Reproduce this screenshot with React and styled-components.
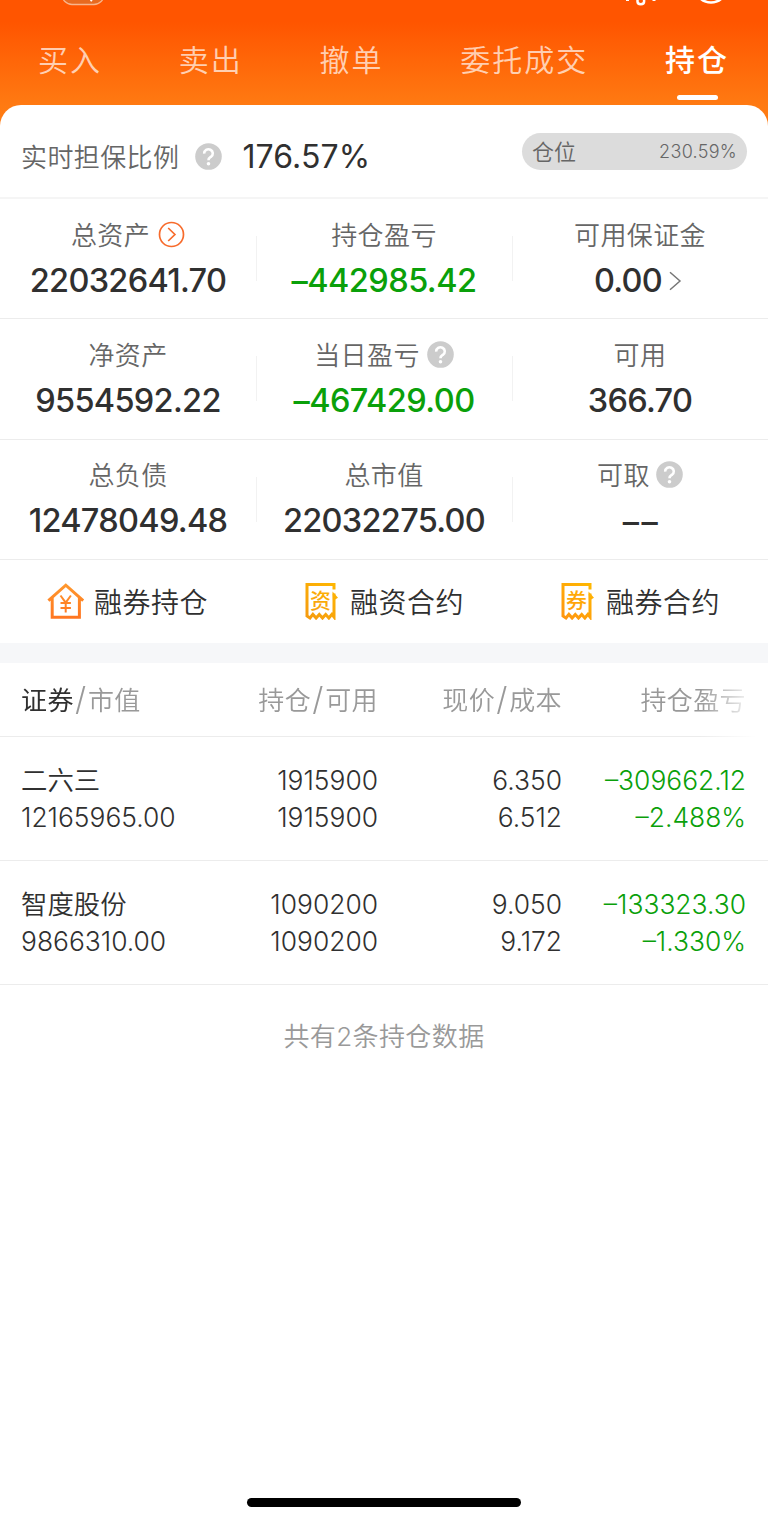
import React from "react"
import styled, { createGlobalStyle } from "styled-components"

const colors = {
  text: "#303030",
  label: "#666",
  muted: "#999",
  line: "#f2f2f2",
  green: "#0aa00a",
  orange: "#f76b2c",
}

const GlobalStyle = createGlobalStyle`
  * {
    box-sizing: border-box;
  }

  body {
    background: #fff;
    color: ${colors.text};
    font-family: Inter, "Noto Sans CJK SC", sans-serif;
    margin: 0;
  }
`

const Page = styled.div`
  display: flex;
  flex-direction: column;
  height: 1522px;
  overflow: hidden;
  width: 768px;
`

const Header = styled.header`
  background: linear-gradient(#ff5500 0, #ff5500 22px, #ff7a12 105px, #ff7d14 126px);
  height: 126px;
`

const StatusBar = styled.div`
  height: 20px;

  svg {
    display: block;
  }
`

const Tabs = styled.nav`
  display: flex;
  justify-content: space-between;
  padding: 18px 41px 0 38px;
`

const Tab = styled.div`
  align-items: center;
  color: ${props => (props.$active ? "#fff" : "rgba(255, 255, 255, 0.7)")};
  display: flex;
  flex-direction: column;
  font-size: 30px;
  font-weight: ${props => (props.$active ? 500 : 350)};
  gap: 12.5px;
  letter-spacing: 2px;
  line-height: 44px;
  margin-right: -2px;

  &::after {
    background: ${props => (props.$active ? "#fff" : "transparent")};
    border-radius: 3px;
    content: "";
    height: 5px;
    width: 41px;
  }
`

const Sheet = styled.main`
  background: #fff;
  border-radius: 21px 21px 0 0;
  flex: 1;
  margin-top: -21px;
`

const RatioRow = styled.div`
  align-items: center;
  border-bottom: 2px solid #f5f5f5;
  display: flex;
  height: 94px;
  padding: 13px 21px 0;
`

const Label = styled.div`
  align-items: center;
  color: ${colors.label};
  display: flex;
  font-size: 26px;
  font-weight: 350;
  height: 36px;
  letter-spacing: 0.4px;
  line-height: 36px;

  svg {
    margin-bottom: 3px;
  }
`

const Ratio = styled.div`
  font-size: 32px;
  letter-spacing: 0.1px;
  margin: -3px 0 0 20px;
`

const Pill = styled.div`
  align-items: center;
  background: #dcdcdc;
  border-radius: 19px;
  color: ${colors.label};
  display: flex;
  font-size: 22px;
  font-weight: 350;
  height: 37px;
  justify-content: space-between;
  margin: -12px 0 0 auto;
  padding: 0 10px 3px;
  width: 225px;
`

const PillValue = styled.span`
  font-size: 18px;
  letter-spacing: 0.3px;
  padding-top: 2px;
`

const Stats = styled.div`
  display: grid;
  grid-template-columns: repeat(3, 256px);
`

const Stat = styled.div`
  align-items: center;
  border-bottom: 1px solid #ececec;
  display: flex;
  flex-direction: column;
  height: 120.3px;
  padding-top: 18.7px;

  &:not(:nth-child(3n + 1)) {
    background: linear-gradient(#f2f2f2, #f2f2f2) left 37px / 1px 45px no-repeat;
  }
`

const StatValue = styled.div`
  align-items: center;
  color: ${props => (props.$down ? colors.green : colors.text)};
  display: flex;
  font-size: 32.5px;
  font-weight: 500;
  height: 44px;
  letter-spacing: ${props => (props.$down ? "-0.55px" : "-0.7px")};
  line-height: 44px;
  margin-top: 5px;
`

const EmptyValue = styled(StatValue)`
  letter-spacing: 2.5px;
  margin-top: 6px;
  padding-left: 3px;
`

const Shortcuts = styled.div`
  display: grid;
  grid-template-columns: repeat(3, 256px);
  height: 83px;
`

const Shortcut = styled.div`
  align-items: center;
  display: flex;
  font-size: 28px;
  font-weight: 350;
  gap: 9px;
  letter-spacing: 0.5px;
  padding-left: 47px;
`

const Divider = styled.div`
  background: #f6f7f9;
  height: 20px;
`

const Row = styled.div`
  border-bottom: 1px solid #ececec;
  display: grid;
  grid-template-columns: 179px 178px 184px 184px;
  padding: 0 21px;
  width: 768px;
`

const HeadRow = styled(Row)`
  color: ${colors.muted};
  font-size: 26px;
  font-weight: 350;
  height: 74.5px;
  letter-spacing: 0.4px;
  line-height: 75px;
  mask-image: linear-gradient(90deg, #000 700px, transparent 756px);

  b {
    color: ${colors.text};
    font-weight: 400;
  }
`

const HeadCell = styled.div`
  text-align: ${props => (props.$left ? "left" : "right")};
  white-space: nowrap;
`

const Slash = styled.span`
  font-size: 32px;
  font-weight: 300;
  line-height: 1;
  margin: 0 1.3px;
`

const PositionRow = styled(Row)`
  height: 124px;
  padding-top: 24.6px;
`

const Cell = styled.div`
  color: ${props => (props.$down ? colors.green : colors.text)};
  font-size: 26.4px;
  font-weight: 350;
  line-height: 37px;
  text-align: ${props => (props.$left ? "left" : "right")};
  white-space: nowrap;
`

const Footer = styled.div`
  color: ${colors.muted};
  font-size: 26px;
  font-weight: 350;
  letter-spacing: 0.4px;
  line-height: 36px;
  padding-top: 33.5px;
  text-align: center;
`

const HomeIndicator = styled.div`
  background: #000;
  border-radius: 5px;
  height: 9px;
  margin: 0 auto 15.5px;
  width: 274px;
`

const HelpIcon = ({ gap }) => (
  <svg width="27" height="27" viewBox="0 0 27 27" style={{ marginLeft: gap }}>
    <circle cx="13.5" cy="13.5" r="13.3" fill="#ccc" />
    <path d="M9.2 10.6a4.3 4.1 0 1 1 6.7 3.2c-1.5 1-2.4 1.5-2.4 3.4" fill="none" stroke="#fff" strokeWidth="2.6" />
    <circle cx="13.5" cy="20.7" r="1.8" fill="#fff" />
  </svg>
)

const CircleArrow = () => (
  <svg width="27" height="27" viewBox="0 0 27 27" fill="none" stroke={colors.orange} strokeWidth="1.7" style={{ marginLeft: 8 }}>
    <circle cx="13.5" cy="13.5" r="12" />
    <path d="M10.2 7l6.7 6.5-6.7 6.5" />
  </svg>
)

const Chevron = () => (
  <svg width="17" height="20" viewBox="0 0 17 20" fill="none" stroke="#777" strokeWidth="1.5" style={{ marginLeft: 7 }}>
    <path d="M1 1.2l10 8.8-10 8.8" />
  </svg>
)

const HouseIcon = () => (
  <svg width="38" height="38" viewBox="0 0 38 38" fill="none" stroke="url(#house)" strokeWidth="3">
    <defs>
      <linearGradient id="house" gradientUnits="userSpaceOnUse" x1="0" y1="0" x2="0" y2="38">
        <stop offset="0" stopColor="#ff9a2e" />
        <stop offset="1" stopColor="#ff7420" />
      </linearGradient>
    </defs>
    <path d="M1.4 18.6L18.8 3.2l17.4 15.4M5.2 16v19.3h27.2V16" />
    <path d="M13.5 13.5l5.2 7.2 5.2-7.2M18.7 20.5v10M13.5 21h10.4M13.5 26h10.4" strokeWidth="2" />
  </svg>
)

const ReceiptIcon = ({ children, from, to }) => (
  <svg width="38" height="38" viewBox="0 0 38 38" fill="none" strokeWidth="3">
    <defs>
      <linearGradient id={`receipt-${children}`} gradientUnits="userSpaceOnUse" x1="34" y1="0" x2="4" y2="38">
        <stop offset="0" stopColor={from} />
        <stop offset="1" stopColor={to} />
      </linearGradient>
    </defs>
    <g stroke={`url(#receipt-${children})`}>
      <path d="M31 7.5V2.4H4v31.6l3 2 2.9-3.6 3.2 3.6 3.2-3.6 3.2 3.6 3.2-3.6 3.2 3.6 3-3.6 2.1 2.6V11.5" />
      <path d="M29.5 9.5l5.5 6.2-5 3z" fill={`url(#receipt-${children})`} stroke="none" />
    </g>
    <text x="17.7" y="26" fontSize="21" fontWeight="500" textAnchor="middle" fill={`url(#receipt-${children})`}>
      {children}
    </text>
  </svg>
)

const stats = [
  { label: "总资产", value: "22032641.70", icon: <CircleArrow /> },
  { label: "持仓盈亏", value: "–442985.42", down: true },
  { label: "可用保证金", value: "0.00", after: <Chevron /> },
  { label: "净资产", value: "9554592.22" },
  { label: "当日盈亏", value: "–467429.00", down: true, icon: <HelpIcon gap={7} /> },
  { label: "可用", value: "366.70" },
  { label: "总负债", value: "12478049.48" },
  { label: "总市值", value: "22032275.00" },
  { label: "可取", icon: <HelpIcon gap={6} /> },
]

const positions = [
  ["二六三", "12165965.00", "1915900", "1915900", "6.350", "6.512", "–309662.12", "–2.488%"],
  ["智度股份", "9866310.00", "1090200", "1090200", "9.050", "9.172", "–133323.30", "–1.330%"],
]

const App = () => (
  <Page>
    <GlobalStyle />
    <Header>
      <StatusBar>
        <svg width="768" height="20" fill="none">
          <rect x="62" y="-20" width="42" height="24.5" rx="10" fill="#e86a20" stroke="#f8b58c" strokeWidth="1.3" />
          <path d="M90.5 0l1.5 1" stroke="#fff" strokeWidth="2" />
          <path d="M637.5 0v1.5q0 2.7 3.3 2.7t3.3-2.7V0" stroke="#fff" strokeWidth="2.5" />
          <path d="M626 .3h3M652.5 .3h3" stroke="#fff" strokeWidth="1.4" />
          <circle cx="711" cy="-13.5" r="16" stroke="#fff" strokeWidth="2.6" />
        </svg>
      </StatusBar>
      <Tabs>
        <Tab>买入</Tab>
        <Tab>卖出</Tab>
        <Tab>撤单</Tab>
        <Tab>委托成交</Tab>
        <Tab $active>持仓</Tab>
      </Tabs>
    </Header>
    <Sheet>
      <RatioRow>
        <Label>
          实时担保比例
          <HelpIcon gap={16} />
        </Label>
        <Ratio>176.57%</Ratio>
        <Pill>
          仓位
          <PillValue>230.59%</PillValue>
        </Pill>
      </RatioRow>
      <Stats>
        {stats.map(stat => (
          <Stat key={stat.label}>
            <Label>
              {stat.label}
              {stat.icon}
            </Label>
            {stat.value ? (
              <StatValue $down={stat.down}>
                {stat.value}
                {stat.after}
              </StatValue>
            ) : (
              <EmptyValue>––</EmptyValue>
            )}
          </Stat>
        ))}
      </Stats>
      <Shortcuts>
        <Shortcut>
          <HouseIcon />
          融券持仓
        </Shortcut>
        <Shortcut>
          <ReceiptIcon from="#ffb800" to="#f59a10">资</ReceiptIcon>
          融资合约
        </Shortcut>
        <Shortcut>
          <ReceiptIcon from="#ffba00" to="#ff9410">券</ReceiptIcon>
          融券合约
        </Shortcut>
      </Shortcuts>
      <Divider />
      <HeadRow>
        <HeadCell $left>
          <b>证券</b>
          <Slash>/</Slash>市值
        </HeadCell>
        <HeadCell>
          持仓<Slash>/</Slash>可用
        </HeadCell>
        <HeadCell>
          现价<Slash>/</Slash>成本
        </HeadCell>
        <HeadCell>持仓盈亏</HeadCell>
      </HeadRow>
      {positions.map(([name, worth, held, usable, price, cost, profit, percent]) => (
        <PositionRow key={name}>
          <Cell $left>
            {name}
            <br />
            {worth}
          </Cell>
          <Cell>
            {held}
            <br />
            {usable}
          </Cell>
          <Cell>
            {price}
            <br />
            {cost}
          </Cell>
          <Cell $down>
            {profit}
            <br />
            {percent}
          </Cell>
        </PositionRow>
      ))}
      <Footer>共有2条持仓数据</Footer>
    </Sheet>
    <HomeIndicator />
  </Page>
)

export default App
